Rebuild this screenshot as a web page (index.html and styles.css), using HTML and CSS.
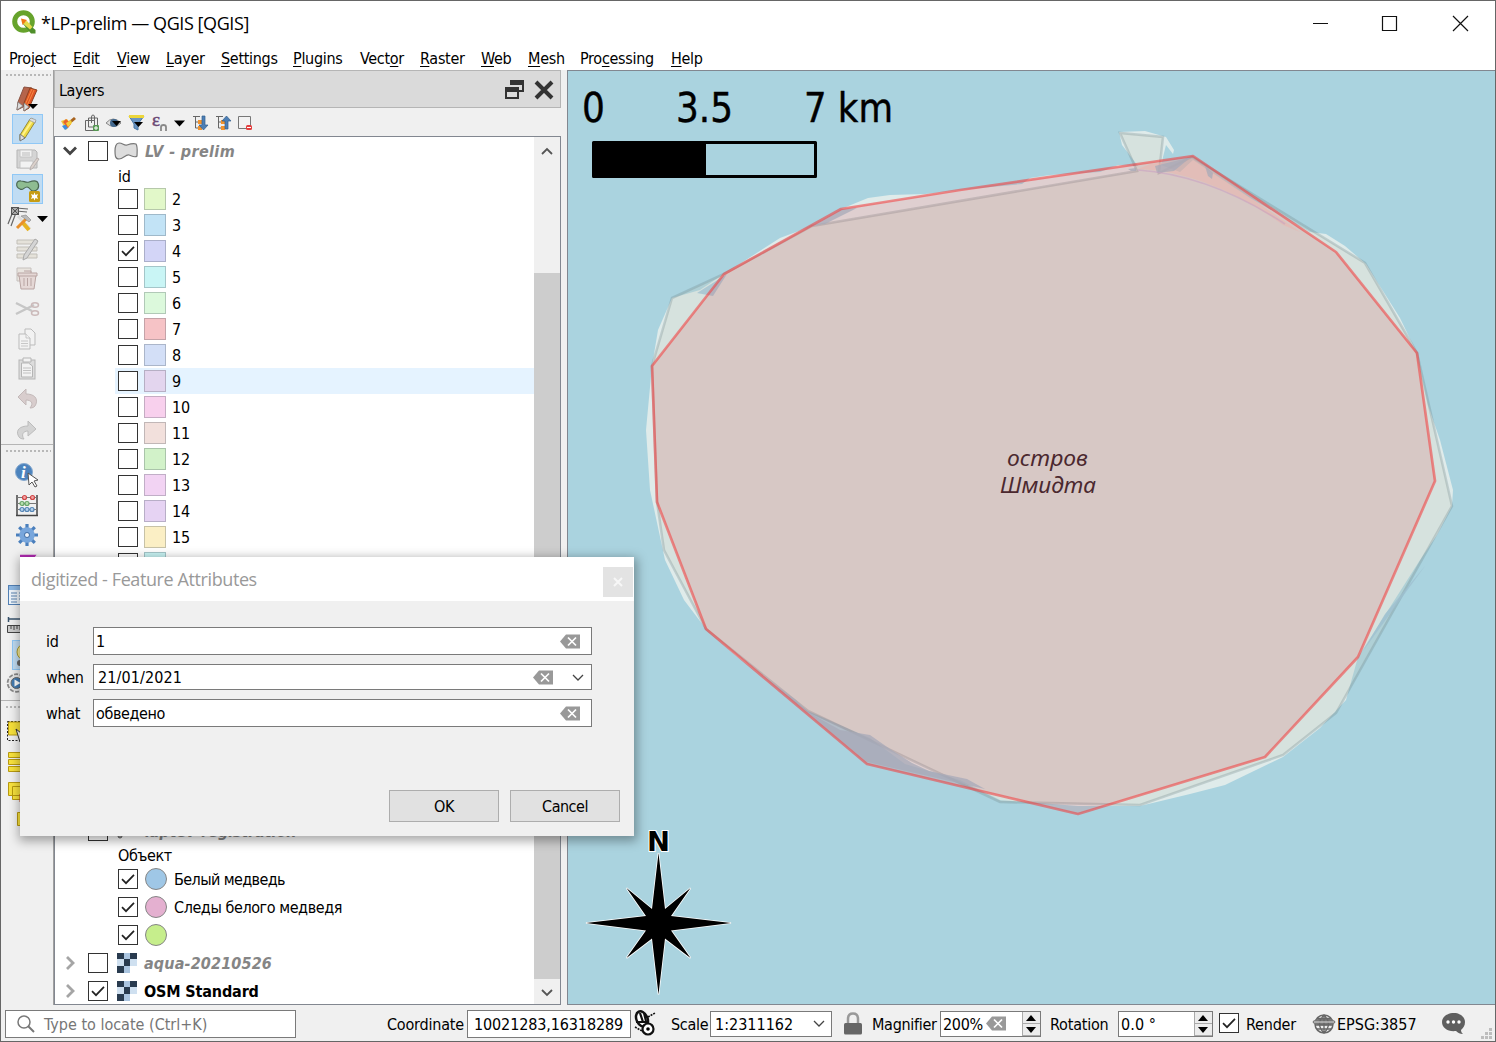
FILE: index.html
```html
<!DOCTYPE html>
<html lang="en">
<head>
<meta charset="utf-8">
<title>*LP-prelim — QGIS [QGIS]</title>
<link rel="stylesheet" href="styles.css">
</head>
<body>
<svg class="defs" width="0" height="0" aria-hidden="true">
  <symbol id="tick" viewBox="0 0 18 18"><path d="M3 9.2l4 4 8-8.4" fill="none" stroke="#222" stroke-width="1.7"/></symbol>
  <symbol id="clear" viewBox="0 0 20 15"><path d="M0 7.5L6 .5H20V14.500H6z" fill="#999"/><path d="M8 3.500l8 8M16 3.500l-8 8" stroke="#fff" stroke-width="1.700"/></symbol>
  <symbol id="raster" viewBox="0 0 20 20"><path fill="#abc5e0" d="M0 0h20v13H13v7H0z"/><path fill="#293b4f" d="M0 0h7v6H0zM13 0h7v6h-7zM7 6h6v7H7zM0 13h7v7H0z"/><path fill="#cfe0f0" d="M0 6h7v7H0zM13 6h7v7h-7z"/></symbol>
  <symbol id="down" viewBox="0 0 12 8"><path d="M1 1l5 5 5-5" fill="none" stroke="#444" stroke-width="1.300"/></symbol>
</svg>

<div class="window">
  <header class="titlebar">
    <svg class="logo" viewBox="0 0 24 24"><circle cx="11.500" cy="11.500" r="8.800" fill="none" stroke="#66a32c" stroke-width="5"/><path d="M14 12l9.500 8v3.500H19l-8-9.500z" fill="#4f8f2b"/><path d="M12 12l3-1 5.500 6-2.500 2.500-6-5z" fill="#e5dc4a"/><path d="M9 8.500l6 1.500-4.500 5z" fill="#ee7913"/></svg>
    <h1 class="title">*LP-prelim — QGIS [QGIS]</h1>
    <svg class="winbuttons" viewBox="0 0 160 20" fill="none" stroke="#111" stroke-width="1.200"><path d="M3 10.500h15M72.500 3.500h14v14h-14zM143 3l15 15M158 3l-15 15"/></svg>
  </header>
  <nav class="menubar">
    <span>Pro<u>j</u>ect</span><span><u>E</u>dit</span><span><u>V</u>iew</span><span><u>L</u>ayer</span><span><u>S</u>ettings</span><span><u>P</u>lugins</span><span>Vect<u>o</u>r</span><span><u>R</u>aster</span><span><u>W</u>eb</span><span><u>M</u>esh</span><span>Pro<u>c</u>essing</span><span><u>H</u>elp</span>
  </nav>

  <main class="main">
    <aside class="tools">
      <div class="grip"></div>
      <div class="tool"><svg viewBox="0 0 30 30"><path d="M12 3l8 1-9 19-6 3 1-8z" fill="#b5644b" stroke="#8a5140"/><path d="M18 4l7 2-8 18-5 3 0-8z" fill="#df5426" stroke="#8d4322"/><path d="M20 5l-7 16M22 6l-7 16" stroke="#f58a42"/><path d="M6 18l5 4-6 4zM12 19l5 4-5 4z" fill="#ddd" stroke="#777" stroke-width=".7"/><path d="M16 20h10l-5 5z"/></svg></div>
      <div class="tool on"><svg viewBox="0 0 30 30"><path d="M18 5q4-1 5 3L13 24l-5 2v-5z" fill="#eedb42" stroke="#94893d"/><path d="M20 7L10 22" stroke="#fff28b" stroke-width="2"/><path d="M8 20l5 4-5 3z" fill="#ddd" stroke="#777"/><path d="M17 6l6 3 1-3-5-2z" fill="#ddd" stroke="#888" stroke-width=".6"/></svg></div>
      <div class="tool off"><svg viewBox="0 0 30 30"><path d="M5 6h18l2 2v16H5z" fill="#d5d5d5" stroke="#b5b5b5"/><path d="M8 6h12v7H8zM8 17h13v7H8z" fill="#f2f2f2" stroke="#c4c4c4"/><path d="M10 9h8M10 11h8" stroke="#bbb"/><path d="M25 14l2 1-6 9-3 2 1-4z" fill="#dcd2cc" stroke="#b9b2b0"/></svg></div>
      <div class="tool on"><svg viewBox="0 0 30 30"><path d="M9 7c3 0 5 2 8 1s8-2 9 1c2 5-1 8-5 8-3 0-3-4-6-4s-4 4-7 2C3 13 4 6 9 7z" fill="#8ebc91" stroke="#4b6852" stroke-width="1.200"/><rect x="17" y="17" width="11" height="11" rx="1.500" fill="#c69c13"/><path d="M22.500 18.500l1 2.500 2.500-1-1 2.500 1 2.500-2.500-1-1 2.500-1-2.500-2.500 1 1-2.500-1-2.500 2.500 1z" fill="#fff"/></svg></div>
      <div class="tool wide"><svg viewBox="0 0 42 30"><path d="M7 5L1 20M10 6L4 22M9 4l12 1M9 7l11 1" stroke="#666" stroke-width="1.200"/><rect x="4.500" y="3.500" width="7" height="7" fill="#aaa" stroke="#555"/><path d="M5 4l6 6M11 4l-6 6" stroke="#555"/><path d="M11 12l12 13" stroke="#ddd" stroke-width="3"/><path d="M16 19l6 7" stroke="#e6b321" stroke-width="4"/><path d="M20 14L10 24" stroke="#e9902b" stroke-width="3"/><path d="M14 12l5-1 5 5-2 2-4-3z" fill="#bbb" stroke="#777" stroke-width=".5"/><path d="M30 12h11l-5.500 6z"/></svg></div>
      <div class="tool off"><svg viewBox="0 0 30 30"><path d="M5 6h20v4H5zM5 13h20v4H5zM5 20h20v4H5z" fill="#e5e2da" stroke="#c2bfb8"/><path d="M23 5l3 2-11 17-4 2 1-5z" fill="#d5d5d5" stroke="#aaa"/></svg></div>
      <div class="tool off"><svg viewBox="0 0 30 30"><path d="M5 4h14v13H5z" fill="#e9e4df" stroke="#c6c1be"/><path d="M7 11h17l-2 14H9z" fill="#e5d8d6" stroke="#b9a5a3"/><path d="M6 9h19v3H6zM12 7h7v2M12 14v8M15.500 14v8M19 14v8" fill="#e5d8d6" stroke="#b9a5a3"/></svg></div>
      <div class="tool off"><svg viewBox="0 0 30 30"><path d="M4 9l16 8M4 20l18-9" stroke="#c6c6c6" stroke-width="2.500"/><ellipse cx="23" cy="11" rx="3.500" ry="2.300" fill="none" stroke="#cbb9b9" stroke-width="1.500"/><ellipse cx="23" cy="19" rx="3.500" ry="2.300" fill="none" stroke="#cbb9b9" stroke-width="1.500"/></svg></div>
      <div class="tool off"><svg viewBox="0 0 30 30" fill="#f2f2f2" stroke="#bbb"><path d="M13 5h6l4 4v12H13z"/><path d="M7 10h7l4 4v11H7z"/><path d="M14 10v4h4M9 17h7M9 19.500h7M9 22h7" stroke-width=".8"/></svg></div>
      <div class="tool off"><svg viewBox="0 0 30 30" fill="#f2f2f2" stroke="#b5b5b5"><rect x="7" y="6" width="16" height="19" fill="#ddd"/><path d="M9.500 9h7l4 3v11h-11zM11 4h8v4h-8z"/><path d="M11 14h8M11 16.500h8M11 19h8" stroke-width=".8"/></svg></div>
      <div class="tool off"><svg viewBox="0 0 30 30"><path d="M6 13l8-8v5c8 0 12 4 10 10-1 3-3 4-6 4 4-5 1-8-4-8v5z" fill="#d8cdcd" stroke="#c3b9b9"/></svg></div>
      <div class="tool off"><svg viewBox="0 0 30 30"><path d="M24 15l-8-8v5c-8 0-12 4-10 9 1 3 3 4 6 4-3-4-1-8 4-8v5z" fill="#d3d3d3" stroke="#bcbcbc"/></svg></div>
      <div class="divider"><div class="grip"></div></div>
      <div class="tool"><svg viewBox="0 0 30 30"><circle cx="12" cy="12" r="8.500" fill="#4c83bd" stroke="#86a9cf"/><text x="9" y="18" class="infoglyph">i</text><path d="M16 13l1 12 3-3 3 5 2-1-3-5 4-1z" fill="#fff" stroke="#555"/></svg></div>
      <div class="tool"><svg viewBox="0 0 30 30" fill="#eee"><path d="M5 5v21M25 5v21M4 25.500h22" stroke="#444" stroke-width="1.500"/><path d="M5 7.500h20M5 13.500h20M5 19.500h20" stroke="#777"/><g stroke="#cf4545" fill="#f2a5a5" stroke-width="1.200"><circle cx="12.500" cy="7.500" r="2"/><circle cx="20.500" cy="7.500" r="2"/></g><g stroke="#68a568" fill="#b8e0b0" stroke-width="1.200"><circle cx="10" cy="13.500" r="2"/><circle cx="15" cy="13.500" r="2"/></g><g stroke="#5485b5" fill="#b5d1ec" stroke-width="1.200"><circle cx="10" cy="19.500" r="2"/><circle cx="15" cy="19.500" r="2"/><circle cx="20" cy="19.500" r="2"/></g></svg></div>
      <div class="tool"><svg viewBox="0 0 30 30"><path d="M15 4v22M4 15h22M7.200 7.200l15.600 15.600M22.800 7.200L7.200 22.800" stroke="#4a7fbc" stroke-width="3.200"/><circle cx="15" cy="15" r="5.200" fill="none" stroke="#78a6dc" stroke-width="5"/><circle cx="15" cy="15" r="2.500" fill="#eef3fa" stroke="#426ea5"/></svg></div>
      <div class="tool"><svg viewBox="0 0 30 30"><path d="M8 6h14L15 15l8 9H8" fill="none" stroke="#b22bb2" stroke-width="2.500"/></svg></div>
      <div class="tool wide"><svg viewBox="0 0 42 30"><rect x="1.500" y="5.500" width="24" height="19" fill="#edf4fb" stroke="#5381b5"/><path d="M2 6h24v4H2z" fill="#8db8e4"/><path d="M4 13h6M4 16h6M4 19h6M4 22h6M12 13h8M12 16h8M12 19h8" stroke="#5b83b0"/></svg></div>
      <div class="tool wide"><svg viewBox="0 0 42 30"><path d="M1 9h25M1.500 7v5" stroke="#39536c" stroke-width="1.500"/><path d="M0.500 15.500h26v7h-26zM4 16v3M7 16v4M10 16v3M13 16v4" fill="#ccc" stroke="#444"/></svg></div>
      <div class="tool on"><svg viewBox="0 0 30 30"><circle cx="13" cy="12" r="8" fill="#f3e893" stroke="#ab9c34"/><circle cx="8" cy="23" r="3" fill="#666"/></svg></div>
      <div class="tool wide"><svg viewBox="0 0 42 30"><circle cx="9.500" cy="13" r="8.500" fill="#eee" stroke="#888" stroke-width="2.500" stroke-dasharray="4 1.340"/><circle cx="9.500" cy="13" r="8" fill="#e6e6e6"/><circle cx="9.500" cy="13" r="5.500" fill="#447bb1" stroke="#666"/><path d="M7.500 9.500l6 3.500-6 3.500z" fill="#fff"/></svg></div>
      <div class="divider"><div class="grip"></div></div>
      <div class="tool wide"><svg viewBox="0 0 42 30"><path d="M0.500 5.500h20v19h-20z" fill="#eee" stroke="#222" stroke-dasharray="2 1.500"/><path d="M1.500 6h18v13h-18z" fill="#f6e03a" stroke="#b79a13"/><path d="M9 13l4 13 2-4 4-1z" fill="#fff" stroke="#333"/></svg></div>
      <div class="tool wide"><svg viewBox="0 0 42 30" fill="#f8e23d" stroke="#b89a10"><path d="M1.500 6.500h22v5h-22zM1.500 13.500h22v5h-22zM1.500 20.500h22v5h-22z"/></svg></div>
      <div class="tool wide"><svg viewBox="0 0 42 30" fill="#f8e23d" stroke="#b89a10"><path d="M1.500 6.500h14v13h-14zM5.500 10.500h14v13h-14z"/><path d="M12.500 18h8v8h-8z" fill="#c34b22" stroke="none"/></svg></div>
      <div class="tool wide"><svg viewBox="0 0 42 30" fill="#f8e23d" stroke="#b89a10"><path d="M10.500 6.500h14v13h-14z"/></svg></div>
    </aside>

    <section class="dock">
      <div class="dockhead"><span>Layers</span>
        <svg viewBox="0 0 54 24"><path d="M11 3h12v10h-5" fill="none" stroke="#333" stroke-width="2"/><path d="M10 2h14v5H10z" fill="#333"/><path d="M6 11h12v9H6z" fill="#ddd" stroke="#333" stroke-width="2"/><path d="M5 9h14v5H5z" fill="#333"/><path d="M36 4l16 16M52 4L36 20" stroke="#333" stroke-width="4"/></svg>
      </div>
      <div class="docktools">
        <svg viewBox="0 0 200 28">
          <path d="M14 8l2 2-6 5-2-2z" fill="#a86420"/><path d="M1 12l6-2 4 5-5 6z" fill="#efc73c"/><path d="M2 17l5-2 1 4-3 2z" fill="#3c8de0"/><path d="M6 10l5 5-3 4-5-6z" fill="#e8622c"/><path d="M6 14l5-3 1 3-4 4z" fill="#f3cf3c"/>
          <path d="M25.500 11.500h9v10h-9zM28.500 9v9h9V9zM31.500 14V8q0-2 1.500-2t1.500 2v9" fill="none" stroke="#666"/><rect x="33" y="16" width="6" height="6" rx="1" fill="#569853"/><path d="M36 17v4M34 19h4" stroke="#fff"/>
          <path d="M46 14q7-8 15 0-7 7-15 0z" fill="#ddd" stroke="#888"/><circle cx="54" cy="14" r="4" fill="#42688e"/><path d="M52 12h9l-4.500 5z"/>
          <path d="M69 7h15l-6 8v6l-4-2v-4z" fill="#6a95c3" stroke="#4676a6"/><path d="M69 6h15v3H69z" fill="#ecd63b"/><path d="M74 13h9l-4.500 5z"/>
          <text x="92" y="17" class="epsilon">ε</text><path d="M101 22v-4q0-2 2.500-2t2.500 2v4" fill="none" stroke="#888" stroke-width="1.800"/>
          <path d="M114 11.500h11l-5.500 6z"/>
          <g fill="none" stroke="#666"><path d="M133 7.500h7M135.500 8v11h3M135.500 13h3M156 7.500h7M158.500 8v11h3M158.500 13h3"/></g><path d="M138 11h4v4h-4zM138 17h4v4h-4zM161 11h4v4h-4zM161 17h4v4h-4z" fill="#f2932d"/>
          <path d="M142 7h3v9h3l-4.500 5-4.500-5h3z" fill="#4d7fb5" stroke="#315e8c" stroke-width=".7"/><path d="M165 20h3v-8h3l-4.500-5-4.500 5h3z" fill="#4d7fb5" stroke="#315e8c" stroke-width=".7"/>
          <path d="M178.500 7.500h12v12h-12z" fill="#f2f2f2" stroke="#777"/><rect x="186" y="16" width="6" height="5" rx="1.500" fill="#e33e3e"/><path d="M187 18.500h4" stroke="#fff"/>
        </svg>
      </div>
      <div class="treebox">
        <div class="tree">
          <div class="row layer"><svg class="arrow open" viewBox="0 0 14 10"><path d="M1 1.500l6 6 6-6"/></svg><i class="box"></i><svg class="shape" viewBox="0 0 24 18"><path d="M5 1c4 0 5 3 8 2s6-2 9-1c2 3 1 9 1 12-2 2-5 0-8-1s-6 4-10 4C1 17 1 13 1 9c0-4 1-8 4-8z" fill="#ddd" stroke="#777" stroke-width="1.200"/></svg><b class="dim name-lv">LV - prelim</b></div>
          <div class="row sub">id</div>
          <div class="row cat"><i class="box"></i><i class="sw c2"></i><span>2</span></div>
          <div class="row cat"><i class="box"></i><i class="sw c3"></i><span>3</span></div>
          <div class="row cat"><i class="box"><svg><use href="#tick"/></svg></i><i class="sw c4"></i><span>4</span></div>
          <div class="row cat"><i class="box"></i><i class="sw c5"></i><span>5</span></div>
          <div class="row cat"><i class="box"></i><i class="sw c6"></i><span>6</span></div>
          <div class="row cat"><i class="box"></i><i class="sw c7"></i><span>7</span></div>
          <div class="row cat"><i class="box"></i><i class="sw c8"></i><span>8</span></div>
          <div class="row cat hover"><i class="box"></i><i class="sw c9"></i><span>9</span></div>
          <div class="row cat"><i class="box"></i><i class="sw c10"></i><span>10</span></div>
          <div class="row cat"><i class="box"></i><i class="sw c11"></i><span>11</span></div>
          <div class="row cat"><i class="box"></i><i class="sw c12"></i><span>12</span></div>
          <div class="row cat"><i class="box"></i><i class="sw c13"></i><span>13</span></div>
          <div class="row cat"><i class="box"></i><i class="sw c14"></i><span>14</span></div>
          <div class="row cat"><i class="box"></i><i class="sw c15"></i><span>15</span></div>
          <div class="row cat"><i class="box"></i><i class="sw c5"></i></div>
          <div class="row layer after-gap"><span class="arrow"></span><i class="box"></i><svg class="shape" viewBox="0 0 24 18"><circle cx="6" cy="14" r="2" fill="#999" stroke="#666"/></svg><b class="dim name-reg">laptev-registration</b></div>
          <div class="row sub obj">Объект</div>
          <div class="row cat tall"><i class="box"><svg><use href="#tick"/></svg></i><i class="dot d1"></i><span class="ru1">Белый медведь</span></div>
          <div class="row cat tall"><i class="box"><svg><use href="#tick"/></svg></i><i class="dot d2"></i><span class="ru2">Следы белого медведя</span></div>
          <div class="row cat tall"><i class="box"><svg><use href="#tick"/></svg></i><i class="dot d3"></i></div>
          <div class="row layer"><svg class="arrow" viewBox="0 0 14 14"><path d="M4 1l6 6-6 6"/></svg><i class="box"></i><svg class="rast"><use href="#raster"/></svg><b class="dim name-aqua">aqua-20210526</b></div>
          <div class="row layer"><svg class="arrow" viewBox="0 0 14 14"><path d="M4 1l6 6-6 6"/></svg><i class="box"><svg><use href="#tick"/></svg></i><svg class="rast"><use href="#raster"/></svg><b class="name-osm">OSM Standard</b></div>
        </div>
        <div class="scroll">
          <svg viewBox="0 0 12 8"><path d="M1 7l5-5 5 5"/></svg>
          <div class="thumb"></div>
          <svg viewBox="0 0 12 8"><path d="M1 1l5 5 5-5"/></svg>
        </div>
      </div>
    </section>

    <section class="map">
      <svg viewBox="568 71 926 933">
        <path fill="#dfebea" d="M652 366L658 330 672 298 700 290 724 274 780 238 812 226 841 209 868 198 890 195 925 194 960 190 1022 184 1030 178 1050 175 1100 172 1118 165 1138 166 1122 145 1119 132 1145 131 1166 137 1174 150 1173 154 1166 145 1161 165 1180 172 1193 160 1250 198 1310 232 1326 234 1345 246 1366 264 1400 318 1417 353 1428 405 1440 440 1453 490 1452 506 1437 535 1420 560 1385 615 1358 657 1346 700 1320 728 1283 757 1225 785 1190 794 1140 806 1078 806 1000 800 960 780 905 764 870 738 808 711 735 655 706 629 684 600 665 560 650 490 646 430z"/>
        <path fill="#bdc9bf" fill-opacity=".26" stroke="#667c80" stroke-opacity=".27" stroke-width="2.500" d="M812 226L1137 171 1120 133 1163 137 1159 173 1192 157 1365 263 1417 353 1452 506 1336 713 1283 755 1140 805 1000 802 808 711 706 629 664 550 657 502 652 366 672 298 724 274z"/>
        <path fill="#f5c6b6" fill-opacity=".4" d="M1193 158L1150 164 1138 169Q1210 172 1283 225L1300 232z"/>
        <g fill="#9ebfcf" fill-opacity=".75"><path d="M1155 166l36-9-17 14-17 2zM1205 166l8 7-1 6-4-3zM1128 169l8-1v3h-5zM841 209l16-1-32 16-13 2zM697 293l30-19-14 22zM745 662l51 38 12 12 32 18 30 5 20 14 22 14 17 8 38 8 18 10-118-27-90-75zM1385 614l40-48-62 85z"/></g>
        <path d="M1138 170Q1210 175 1285 224" fill="none" stroke="#c5b5d8" stroke-width="1.500" stroke-opacity=".6"/>
        <path d="M1193 156L1336 252 1417 353 1435 481 1358 657 1265 757 1078 814 867 764 706 629 657 502 652 366 724 274 841 209 960 190z" fill="#e02832" fill-opacity=".14" stroke="#f23e3e" stroke-opacity=".57" stroke-width="2.700" stroke-linejoin="round"/>
        <text class="island"><tspan x="1007" y="466" textLength="81" lengthAdjust="spacingAndGlyphs">остров</tspan><tspan x="1000" y="493" textLength="96" lengthAdjust="spacingAndGlyphs">Шмидта</tspan></text>
        <g class="scaletext"><text x="582" y="122">0</text><text x="676" y="122" textLength="57" lengthAdjust="spacingAndGlyphs">3.5</text><text x="804" y="122" textLength="89" lengthAdjust="spacingAndGlyphs">7 km</text></g>
        <rect x="593.500" y="142.500" width="222" height="34" fill="none" stroke="#000" stroke-width="3" stroke-linejoin="round"/><path d="M593 142h113v36H593z"/>
        <text class="north" x="647" y="851" textLength="23" lengthAdjust="spacingAndGlyphs">N</text>
        <path d="M658.500 853L665 909 690.500 888 671 916 731 923 671 930.500 690.500 958 665 938.500 658.500 994.500 652 938.500 626.500 958 646 930.500 586 923 646 916 626.500 888 652 909z" stroke="#fff" stroke-width="1.600" paint-order="stroke"/>
      </svg>
    </section>
  </main>

  <footer class="status">
    <div class="locate"><svg viewBox="0 0 20 20"><circle cx="8" cy="8" r="6" fill="none" stroke="#777" stroke-width="1.500"/><path d="M12 12l6 6" stroke="#777" stroke-width="2"/></svg><span>Type to locate (Ctrl+K)</span></div>
    <span class="lab coord">Coordinate</span>
    <div class="field coordval"><span>10021283,16318289</span></div>
    <svg class="mouse" viewBox="0 0 24 26"><ellipse cx="8" cy="8" rx="5.500" ry="8" transform="rotate(-25 8 8)" fill="#fff" stroke="#111" stroke-width="2.500"/><path d="M6 2l3 9M10 2l2 8M2 11l11 0" stroke="#111" stroke-width="2.200"/><circle cx="14" cy="18" r="5.500" fill="#fff" stroke="#111" stroke-width="2.200"/><circle cx="14" cy="18" r="1.800"/><path d="M14 6l7-4M1 16l7 4" stroke="#111" stroke-width="1.500" stroke-dasharray="2 1"/></svg>
    <span class="lab scale">Scale</span>
    <div class="field scaleval"><span>1:2311162</span><svg class="chev"><use href="#down"/></svg></div>
    <svg class="lock" viewBox="0 0 18 23"><path d="M4 11V7q0-5.500 5-5.500T14 7v4" fill="none" stroke="#999" stroke-width="2.500"/><rect y="11" width="18" height="11.500" rx="1.500" fill="#666"/></svg>
    <span class="lab magn">Magnifier</span>
    <div class="field spin magval"><span>200%</span><svg class="clr"><use href="#clear"/></svg><div class="arrows"><i></i><i class="dn"></i></div></div>
    <span class="lab rot">Rotation</span>
    <div class="field spin rotval"><span>0.0 °</span><div class="arrows"><i></i><i class="dn"></i></div></div>
    <i class="box rbox"><svg><use href="#tick"/></svg></i>
    <span class="lab render">Render</span>
    <svg class="globe" viewBox="0 0 24 22"><circle cx="12" cy="11" r="9" fill="#eee" stroke="#666" stroke-width="1.500"/><ellipse cx="12" cy="9" rx="11.500" ry="3.500" fill="#777"/><path d="M3 12h18M5 5.500h14M5 16h14M12 2v18M12 2q-9 9 0 18M12 2q9 9 0 18" fill="none" stroke="#666" stroke-width="1.300"/><path d="M2 9h20" stroke="#ddd"/></svg>
    <span class="lab epsg">EPSG:3857</span>
    <svg class="bubble" viewBox="0 0 24 24"><path d="M12 1c6 0 11 4 11 9 0 4-2 6-4 8 0 2 1 3 2 4-3 0-5-1-7-3C6 20 0 16 0 10 0 5 5 1 12 1z" fill="#5f5f5f"/><circle cx="6" cy="10" r="1.700" fill="#fff"/><circle cx="11.500" cy="10" r="1.700" fill="#fff"/><circle cx="17" cy="10" r="1.700" fill="#fff"/></svg>
    <svg class="corner" viewBox="0 0 12 12" fill="#bdbdbd"><path d="M8 0h3v3H8zM4 4h3v3H4zM8 4h3v3H8zM0 8h3v3H0zM4 8h3v3H4zM8 8h3v3H8z"/></svg>
  </footer>
</div>

<div class="dialog">
  <div class="dtitle"><span>digitized - Feature Attributes</span><div class="dclose"><svg viewBox="0 0 10 10"><path d="M1 1l8 8M9 1l-8 8" stroke="#f7f7f7" stroke-width="2"/></svg></div></div>
  <div class="form">
    <label>id</label><div class="input"><span>1</span><svg class="clr"><use href="#clear"/></svg></div>
    <label class="lwhen">when</label><div class="input date"><span>21/01/2021</span><svg class="clr"><use href="#clear"/></svg><svg class="chev"><use href="#down"/></svg></div>
    <label class="lwhat">what</label><div class="input"><span class="ru3">обведено</span><svg class="clr"><use href="#clear"/></svg></div>
  </div>
  <div class="actions"><button>OK</button><button>Cancel</button></div>
</div>
</body>
</html>
```
FILE: styles.css
```css
* { box-sizing: border-box; }
body {
  margin: 0;
  width: 1496px;
  height: 1042px;
  overflow: hidden;
  position: relative;
  font: 16px/20px "DejaVu Sans Condensed", "DejaVu Sans", sans-serif;
  font-stretch: condensed;
  letter-spacing: -0.3px;
  color: #000;
  background: #fff;
}
svg { display: block; flex: none; overflow: visible; }
i { font-style: normal; }
.defs { position: absolute; }
.window {
  display: flex;
  flex-direction: column;
  height: 1042px;
  border: 1px solid #666;
  background: #f0f0f0;
}

/* title and menu */
.titlebar { height: 45px; background: #fff; display: flex; align-items: center; padding-left: 11px; flex: none; }
.logo { width: 24px; height: 24px; margin-top: -3px; }
.title { margin: -2px auto 0 5px; font: 18px/24px "Open Sans", sans-serif; letter-spacing: -0.42px; white-space: nowrap; }
.winbuttons { width: 160px; height: 20px; margin: -2px 25px 0 0; }
.menubar {
  height: 24px;
  flex: none;
  background: #fff;
  padding: 2px 0 0 8px;
  display: grid;
  grid-template-columns: 64px 44px 49px 55px 72px 67px 60px 61px 47px 52px 91px 40px;
  align-items: center;
  white-space: nowrap;
}
.menubar u { text-underline-offset: 2px; text-decoration-thickness: 1px; }

.main { display: grid; grid-template-columns: 53px 507px 6px 1fr; grid-template-rows: 100%; height: 935px; flex: none; }

/* left tool strip */
.tools { padding: 1px 0 0 11px; border-right: 1px solid #a0a0a0; overflow: hidden; }
.grip { height: 13px; margin-left: -7px; margin-right: 2px; background: radial-gradient(circle, #b8b8b8 1px, transparent 1.5px) 0 2px / 4px 4px repeat-x; }
.tool { width: 31px; height: 30px; }
.tool svg { width: 30px; height: 30px; }
.tool.wide { margin-left: -5px; width: 42px; }
.tool.wide svg { width: 42px; }
.tool.on { background: #c0dcf3; border: 1px solid #90c8f6; }
.tool.on svg { margin: -1px; }
.divider { height: 16px; margin-left: -11px; padding-left: 11px; padding-top: 3px; background: linear-gradient(#b5b5b5, #b5b5b5) 0 0 / 100% 1px no-repeat; }

/* layers dock */
.dock { display: flex; flex-direction: column; min-width: 0; min-height: 0; }
.dockhead { height: 38px; flex: none; border: 1px solid #b5b5b5; background: #dadada; display: flex; align-items: center; justify-content: space-between; padding: 1px 6px 0 4px; }
.dockhead span { padding-top: 2px; letter-spacing: -0.45px; }
.dockhead svg { width: 54px; height: 24px; }
.docktools { height: 28px; flex: none; padding-left: 5px; }
.docktools svg { width: 200px; height: 28px; margin: 1px 0 -1px 1px; }
.epsilon { font: 19px "Liberation Serif", serif; fill: #6b4774; stroke: #6b4774; stroke-width: .5px; }
.infoglyph { font: italic bold 17px "Liberation Serif", serif; fill: #fff; }
.treebox { flex: 1; border: 1px solid #828790; display: flex; background: #fff; min-height: 0; }
.tree { flex: 1; overflow: hidden; }
.scroll { width: 26px; background: #f0f0f0; display: flex; flex-direction: column; align-items: center; overflow: hidden; }
.scroll svg { width: 12px; height: 8px; margin: 10px 0 11px; fill: none; stroke: #555; stroke-width: 1.8; }
.thumb { width: 26px; height: 706px; margin-top: 107px; background: #cdcdcd; flex: none; }
.row { display: flex; align-items: center; white-space: nowrap; }
.layer { height: 28px; padding-left: 8px; }
.layer b { padding-top: 2px; }
.sub { height: 21px; padding-left: 63px; padding-top: 2px; }
.obj { padding-top: 0; letter-spacing: -0.45px; }
.cat { height: 26px; padding-left: 3px; margin-left: 60px; letter-spacing: -0.2px; }
.cat span { padding-top: 2px; }
.hover { background: #e5f3ff; }
.tall { height: 28px; }
.tall, .tall + .layer, .tall + .layer + .layer { position: relative; top: -1px; }
.box { width: 20px; height: 20px; border: 1px solid #333; background: #fff; flex: none; }
.box svg { width: 18px; height: 18px; }
.sw { width: 22px; height: 22px; margin: 0 6px; border: 1px solid rgba(80, 90, 100, .3); }
.c2 { background: #e2f8c9; } .c3 { background: #c2e3f6; } .c4 { background: #d3d5f7; } .c5 { background: #c9f5f5; }
.c6 { background: #dcf9dc; } .c7 { background: #f6c3c6; } .c8 { background: #d3dff7; } .c9 { background: #e3d5ee; }
.c10 { background: #f8d0ed; } .c11 { background: #f2e0dc; } .c12 { background: #d2f2c9; } .c13 { background: #f2d3f3; }
.c14 { background: #e6d3f3; } .c15 { background: #fbefc5; }
.dot { width: 22px; height: 22px; border-radius: 50%; border: 1px solid #858585; margin: 0 7px 0 7px; }
.d1 { background: #9fc7e6; } .d2 { background: #e4b0d0; } .d3 { background: #c6ee8c; }
.ru1 { letter-spacing: -0.6px; }
.ru2 { letter-spacing: -0.42px; }
.ru3 { letter-spacing: -0.4px; }
.arrow { width: 14px; height: 14px; margin-right: 11px; fill: none; stroke: #a5a5a5; stroke-width: 2.8; flex: none; }
.arrow.open { height: 10px; stroke: #444; }
.shape { width: 24px; height: 18px; margin: 0 7px 0 6px; }
.rast { width: 20px; height: 20px; margin: 0 7px 0 9px; }
.dim { color: #858585; font-style: italic; }
.name-lv { letter-spacing: 0.35px; }
.name-aqua { letter-spacing: 0.15px; }
.name-reg { letter-spacing: -0.1px; }
.name-osm { letter-spacing: -0.15px; }
.after-gap { margin-top: 241px; }

/* map canvas */
.map { grid-column: 4; background: #aad3df; border: 1px solid #828790; border-right: 0; overflow: hidden; }
.map svg { width: 926px; height: 933px; letter-spacing: 0; }
.island { font: italic 22px "Noto Sans", sans-serif; fill: #4b282f; }
.scaletext { font: 40px "DejaVu Sans Condensed", "DejaVu Sans", sans-serif; font-stretch: condensed; stroke: #000; stroke-width: .4px; }
.north { font: bold 27px "DejaVu Sans", sans-serif; stroke: #fff; stroke-width: 2px; paint-order: stroke; }

/* status bar */
.status { flex: 1; display: flex; align-items: center; padding: 1px 0 0 4px; white-space: nowrap; }
.locate { width: 291px; height: 28px; border: 1px solid #7a7a7a; background: #fff; color: #767676; display: flex; align-items: center; padding-left: 10px; gap: 8px; margin-right: 91px; flex: none; letter-spacing: 0; }
.locate span, .field span { padding-top: 2px; }
.locate svg { width: 20px; height: 20px; }
.lab { flex: none; padding-top: 2px; }
.field { height: 26px; border: 1px solid #7a7a7a; background: #fff; display: flex; align-items: center; padding-left: 4px; flex: none; }
.coord { width: 80px; letter-spacing: -0.2px; }
.coordval { width: 164px; height: 28px; padding-left: 6px; letter-spacing: -0.12px; }
.mouse { width: 24px; height: 26px; margin: 0 13px 0 3px; }
.scale { width: 36px; margin-right: 3px; }
.scaleval { width: 122px; justify-content: space-between; padding-right: 6px; letter-spacing: 0; }
.chev { width: 12px; height: 8px; }
.lock { width: 18px; height: 23px; margin: 0 10px 0 12px; }
.magn { width: 68px; }
.magval { width: 101px; padding-left: 2px; }
.clr { width: 20px; height: 15px; }
.magval .clr { margin-left: 3px; }
.arrows { width: 18px; height: 24px; margin-left: auto; border-left: 1px solid #aaa; background: #ececec; }
.arrows i { display: block; height: 12px; border-bottom: 1px solid #aaa; background: #ececec; padding: 3px 0 0 3px; }
.arrows i::before { content: ""; display: block; width: 0; border: 5px solid transparent; border-top: 0; border-bottom: 6px solid #000; }
.arrows .dn::before { border-top: 6px solid #000; border-bottom: 0; }
.rot { width: 59px; margin: 0 9px; letter-spacing: -0.2px; }
.rotval { width: 95px; padding-left: 2px; margin-right: 6px; letter-spacing: 0.1px; }
.rbox { margin: -2px 7px 0 0; }
.render { width: 51px; margin-right: 15px; letter-spacing: -0.2px; }
.globe { width: 24px; height: 22px; margin-right: 1px; }
.epsg { width: 80px; margin-right: 25px; letter-spacing: 0; }
.bubble { width: 24px; height: 24px; margin-right: 15px; }
.corner { width: 12px; height: 12px; align-self: flex-end; margin-bottom: 1px; }

/* floating attribute form */
.dialog { position: absolute; left: 20px; top: 557px; width: 614px; height: 279px; background: #f0f0f0; box-shadow: 1px 3px 10px 2px rgba(0, 0, 0, .34); }
.dtitle { height: 44px; background: #fff; padding: 0 1px 0 11px; display: flex; align-items: center; justify-content: space-between; color: #999; font: 18px/24px "Open Sans", sans-serif; letter-spacing: -0.4px; }
.dclose { width: 30px; height: 30px; background: #e3e3e3; display: grid; place-items: center; margin-top: 6px; }
.dclose svg { width: 10px; height: 10px; }
.form { padding: 26px 42px 0 26px; display: grid; grid-template-columns: 47px 1fr; grid-template-rows: 28px 26px 28px; row-gap: 9px; align-items: center; height: 189px; align-content: start; }
.form label { padding-top: 2px; }
.input { height: 100%; border: 1px solid #7a7a7a; background: #fff; display: flex; align-items: center; padding: 1px 11px 0 2px; }
.input span { padding-top: 1px; }
.input .clr { margin-left: auto; margin-top: -1px; }
.date { padding-left: 4px; padding-right: 7px; letter-spacing: 0.1px; }
.date .chev { margin-left: 19px; }
.actions { display: flex; justify-content: flex-end; gap: 11px; padding-right: 14px; }
.actions button { width: 110px; height: 32px; padding: 2px 0 0; border: 1px solid #adadad; background: #e1e1e1; font: inherit; font-stretch: condensed; letter-spacing: -0.5px; color: #000; }
```
